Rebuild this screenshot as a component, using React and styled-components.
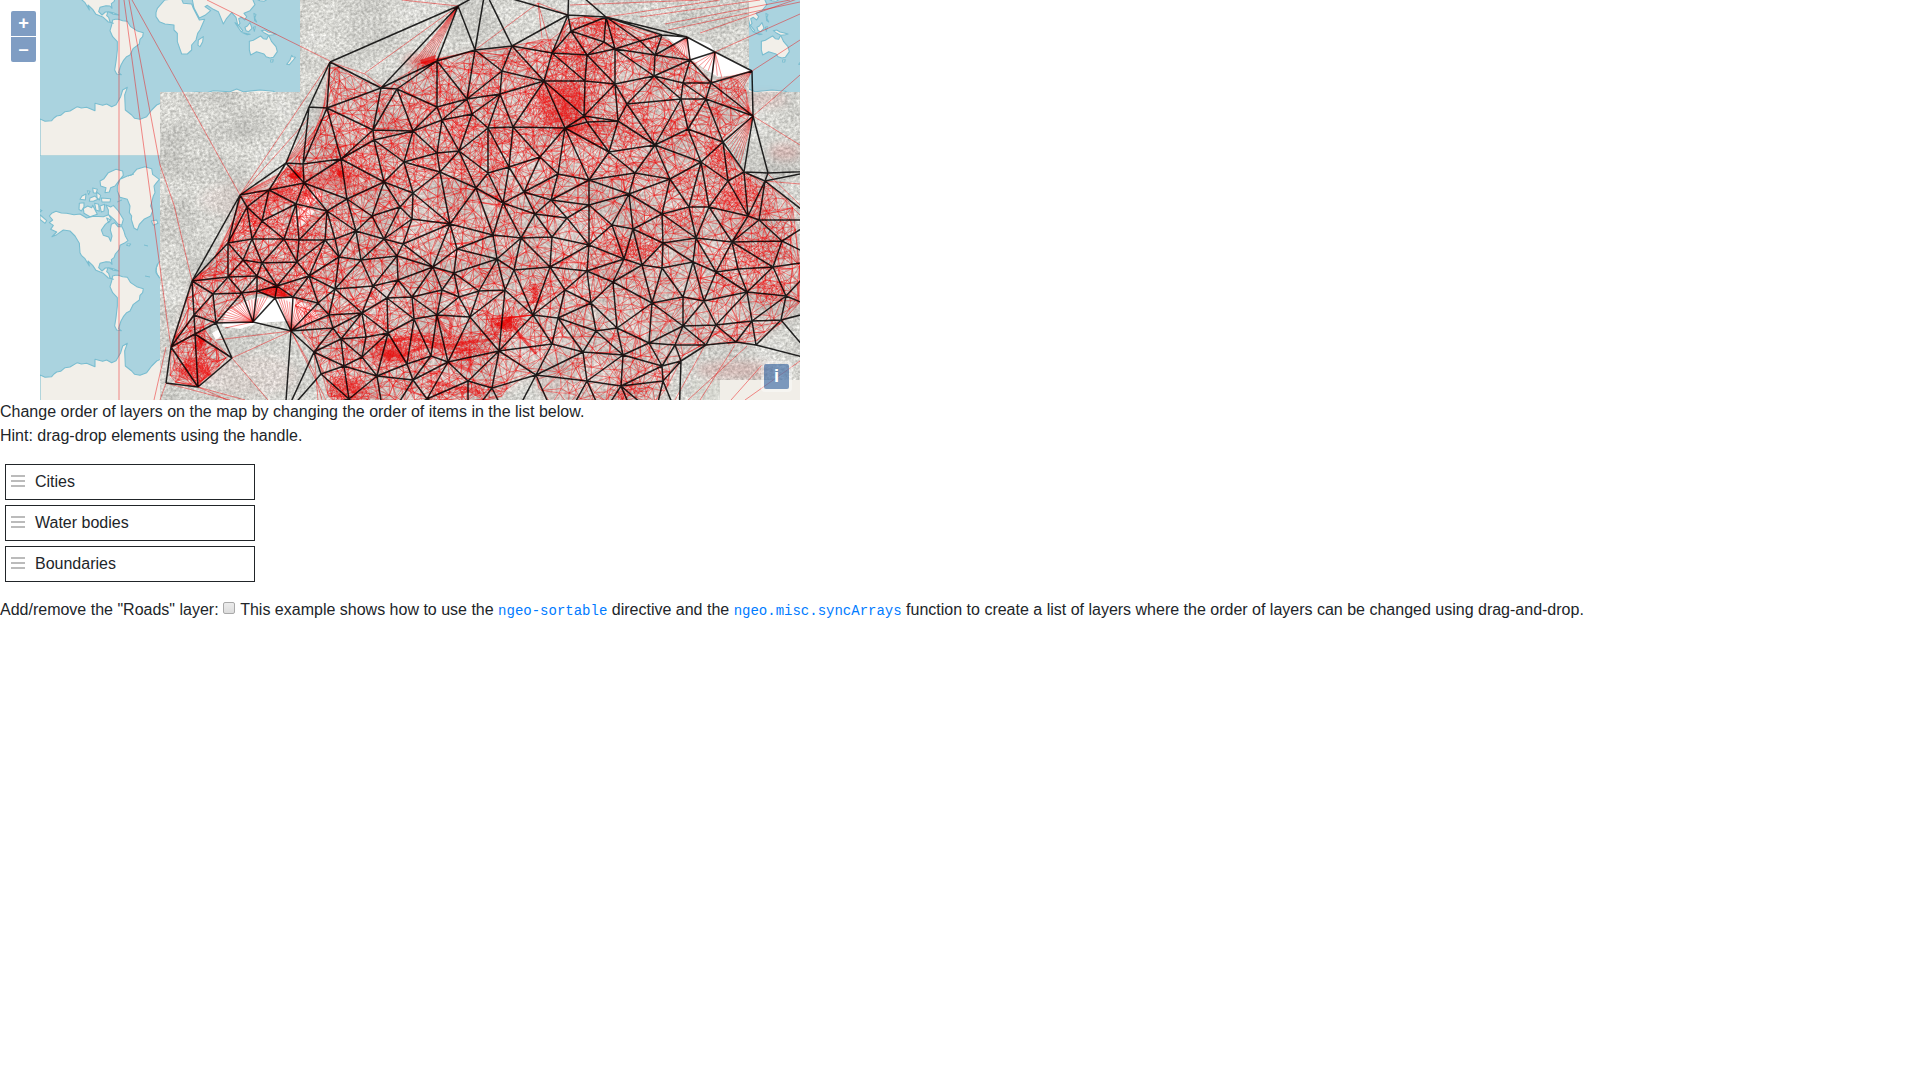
import React, { useMemo, useState } from "react";
import styled, { createGlobalStyle } from "styled-components";

const GlobalStyle = createGlobalStyle`
  *, *::before, *::after { box-sizing: border-box; }
  body {
    margin: 0;
    background: #fff;
    color: #212529;
    font: 400 16px/1.5 "Liberation Sans", Arial, sans-serif;
  }
`;

const MapFrame = styled.div`
  position: relative;
  width: 800px;
  height: 400px;
  overflow: hidden;
`;

const MapDrawing = styled.svg`
  display: block;
`;

const Control = styled.div`
  position: absolute;
  display: flex;
  flex-direction: column;
  gap: 1px;
  padding: 3px;
  border-radius: 4px;
  background: rgba(255, 255, 255, 0.4);
`;

const ZoomControl = styled(Control)`
  top: 8px;
  left: 8px;
`;

const InfoControl = styled(Control)`
  right: 8px;
  bottom: 8px;
`;

const ControlButton = styled.button`
  display: flex;
  align-items: center;
  justify-content: center;
  width: 25px;
  height: 25px;
  padding: 0;
  border: 0;
  border-radius: ${(p) => p.$radius || "2px"};
  background: rgba(0, 60, 136, 0.5);
  color: #fff;
  font: 700 18.24px/1 "Liberation Sans", Arial, sans-serif;
`;

const Paragraph = styled.p`
  margin: 0 0 16px;
`;

const LayerList = styled.ul`
  display: flex;
  flex-direction: column;
  gap: 5px;
  width: 250px;
  margin: 0 0 16px 5px;
  padding: 0;
  list-style: none;
`;

const LayerItem = styled.li`
  display: flex;
  align-items: center;
  height: 36px;
  padding: 0 5px;
  border: 1px solid #212529;
`;

const Handle = styled.span`
  display: flex;
  flex-direction: column;
  gap: 3px;
  width: 14px;
  margin: 0 10px 2px 0;
  cursor: move;
`;

const HandleBar = styled.i`
  height: 2px;
  background: #bbb;
`;

const Checkbox = styled.input`
  appearance: none;
  width: 12px;
  height: 12px;
  margin: 0 1px 0 0;
  border: 1px solid #a9a9a9;
  border-radius: 2px;
  background: linear-gradient(#ececec, #dcdcdc);
  vertical-align: 1px;
`;

const Code = styled.code`
  color: #007bff;
  font: 14px "Liberation Mono", monospace;
`;

/* Vertices of the coarse network, as x,y pairs. */
const NODES = `330,62 381,88 309,107 327,108 286,163 303,164 341,159 373,130 374,140 397,89 240,195 269,190 304,183 384,182
458,6 485,-9 475,50 512,46 568,15 569,-15 606,17 571,31 552,53 587,55 604,42 615,49 640,41 662,35 687,37 655,55 654,76 690,60 715,52
752,71 711,83 683,83 681,99 706,99 753,116 615,84 585,81 544,81 502,71 500,94 437,61 467,99 472,114 437,107 442,120 413,131 488,128
513,127 565,128 584,116 587,122 627,104 618,121 609,152 655,145 688,129 723,142 701,162 744,172 768,173 765,181 815,171 670,179
635,173 589,180 558,174 540,157 509,167 488,173 476,188 524,192 459,151 437,153 440,172 404,162 413,193 728,181 629,194
503,203 551,200 589,205 412,219 450,224 493,235 521,238 535,214 567,218 552,237 612,225 589,245 662,214 633,229 663,243 689,207
709,207 696,238 748,216 759,220 732,242 782,241 457,249 497,259 433,267 454,273 514,270 550,267 587,271 624,259 642,265 662,268
693,262 716,272 738,269 773,267 613,282 565,290 505,290 479,291 459,297 442,290 412,297 437,315 414,319 470,317 533,315 558,318
591,303 652,303 683,297 704,301 747,292 786,296 596,331 617,328 683,326 716,325 752,321 781,320 736,342 756,345 706,345 675,345
649,343 552,344 583,352 623,355 681,361 662,366 663,381 621,386 587,381 536,375 499,351 431,356 448,362 407,364 413,380 468,381
492,388 427,399 247,207 296,204 327,211 347,199 262,221 372,216 400,207 228,243 252,239 284,239 299,240 325,240 335,239
356,231 384,239 403,244 397,256 339,257 361,260 297,262 243,260 262,263 228,277 257,276 309,276 192,281 277,286 335,289 373,286
398,280 213,294 242,293 257,291 275,298 293,297 318,303 387,298 194,315 216,323 253,322 291,331 329,315 362,313 333,328
341,339 366,337 388,333 195,334 171,347 232,358 166,383 198,387 314,352 321,374 344,366 362,357 377,376 349,399 285,415
274,440 385,425 410,430 468,420 510,425 560,430 602,415 655,415 679,420 815,360 815,220 820,260 820,310 640,430`
  .trim()
  .split(/\s+/)
  .map((p) => p.split(",").map(Number));

/* Links that the survey network leaves out of its hull. */
const SKIPPED_LINKS = new Set([
  "330,62 437,61", "752,71 815,171", "753,116 815,171", "569,-15 752,71", "569,-15 687,37", "569,-15 662,35",
  "569,-15 815,171", "606,17 752,71", "662,35 752,71", "569,-15 715,52", "606,17 715,52", "687,37 752,71",
  "330,62 286,163", "330,62 240,195", "309,107 240,195",
]);

const EXTRA_LINKS = "M381 88L458 6M606 17L687 37M687 37L715 52M715 52L752 71M240 195L192 281";

const COUNTRY = [
  [330, 62], [382, 87], [415, 64], [475, 50], [512, 46], [555, 36], [568, 15], [606, 17], [662, 35], [690, 58], [711, 82], [742, 73],
  [753, 116], [722, 142], [744, 172], [765, 181], [800, 210], [800, 310], [756, 343], [706, 345], [681, 361], [660, 405], [550, 405],
  [530, 376], [490, 405], [330, 405], [314, 352], [297, 328], [293, 299], [257, 293], [225, 312], [205, 330], [232, 358], [198, 387],
  [166, 383], [171, 347], [192, 281], [212, 262], [240, 195], [269, 188], [290, 163], [316, 125],
];

/* Denser built-up areas: x, y, x spread, y spread, number of points. */
const CLUSTERS = [
  [295, 174, 7, 4, 90], [340, 173, 6, 7, 60], [270, 190, 18, 7, 110], [256, 217, 8, 10, 80], [302, 193, 14, 8, 80], [427, 60, 12, 4, 90],
  [562, 105, 20, 19, 560], [580, 60, 22, 16, 170], [605, 30, 12, 10, 90], [195, 369, 11, 8, 130], [200, 342, 4, 8, 80],
  [277, 290, 12, 4, 130], [395, 352, 18, 8, 160], [440, 340, 40, 5, 180], [505, 323, 13, 6, 120], [470, 352, 14, 8, 100],
  [349, 388, 14, 10, 130], [450, 390, 30, 7, 80], [720, 160, 9, 14, 110], [735, 195, 20, 12, 150], [760, 250, 22, 16, 150],
  [632, 250, 18, 10, 110], [300, 245, 24, 22, 130], [370, 165, 30, 20, 130], [680, 220, 16, 10, 70], [630, 125, 26, 14, 100],
  [775, 292, 14, 8, 70], [465, 130, 40, 30, 200], [534, 292, 5, 7, 35], [250, 263, 22, 10, 80], [635, 390, 12, 7, 50],
];

function inside([x, y], poly) {
  let hit = false;
  for (let i = 0, j = poly.length - 1; i < poly.length; j = i++) {
    const [xi, yi] = poly[i];
    const [xj, yj] = poly[j];
    if (yi > y !== yj > y && x < ((xj - xi) * (y - yi)) / (yj - yi) + xi) hit = !hit;
  }
  return hit;
}

function randomSource(seed) {
  let s = seed;
  return () => {
    s = (s + 0x6d2b79f5) | 0;
    let t = Math.imul(s ^ (s >>> 15), 1 | s);
    t = (t + Math.imul(t ^ (t >>> 7), 61 | t)) ^ t;
    return ((t ^ (t >>> 14)) >>> 0) / 4294967296;
  };
}

/* Sweep-line Delaunay triangulation; returns unique edges as index pairs. */
function delaunayEdges(points) {
  const n = points.length;
  const v = points.concat([[-4000, -3000], [400, 9000], [5000, -3000]]);
  const order = points.map((_, i) => i).sort((a, b) => v[a][0] - v[b][0]);
  const circle = (a, b, c) => {
    const [ax, ay] = v[a];
    const bx = v[b][0] - ax, by = v[b][1] - ay;
    const cx = v[c][0] - ax, cy = v[c][1] - ay;
    const d = 2 * (bx * cy - by * cx) || 1e-9;
    const b2 = bx * bx + by * by, c2 = cx * cx + cy * cy;
    const ux = (cy * b2 - by * c2) / d, uy = (bx * c2 - cx * b2) / d;
    return { a, b, c, x: ax + ux, y: ay + uy, r: ux * ux + uy * uy };
  };
  let open = [circle(n, n + 1, n + 2)];
  const closed = [];
  for (const i of order) {
    const [px, py] = v[i];
    const border = new Map();
    const keep = [];
    for (const t of open) {
      const dx = px - t.x, dy = py - t.y;
      if (dx > 0 && dx * dx > t.r) {
        closed.push(t);
      } else if (dx * dx + dy * dy - t.r > 1e-7) {
        keep.push(t);
      } else {
        for (const [p, q] of [[t.a, t.b], [t.b, t.c], [t.c, t.a]]) {
          const k = p < q ? p * 20000 + q : q * 20000 + p;
          if (border.has(k)) border.delete(k);
          else border.set(k, [p, q]);
        }
      }
    }
    border.forEach(([p, q]) => keep.push(circle(p, q, i)));
    open = keep;
  }
  const edges = new Map();
  for (const t of closed.concat(open)) {
    for (const [p, q] of [[t.a, t.b], [t.b, t.c], [t.c, t.a]]) {
      if (p < n && q < n) edges.set(p < q ? p * 20000 + q : q * 20000 + p, [p, q]);
    }
  }
  return [...edges.values()];
}

const segment = ([a, b], [c, d]) => `M${a.toFixed(1)} ${b.toFixed(1)}L${c.toFixed(1)} ${d.toFixed(1)}`;

function coarseNetwork() {
  return (
    delaunayEdges(NODES)
      .filter(([a, b]) => {
        const p = NODES[a];
        const q = NODES[b];
        const x = (p[0] + q[0]) / 2;
        const y = (p[1] + q[1]) / 2;
        if (SKIPPED_LINKS.has(`${p} ${q}`) || SKIPPED_LINKS.has(`${q} ${p}`)) return false;
        if (Math.hypot(p[0] - q[0], p[1] - q[1]) > 145) return false;
        if (x > 684 && y > 353 && x < 778) return false;
        if (x > 235 && x < 282 && y > 335 && y < 400) return false;
        if (x < 280 && y > 386) return false;
        return true;
      })
      .map(([a, b]) => segment(NODES[a], NODES[b]))
      .join("") + EXTRA_LINKS
  );
}

function fineNetwork() {
  const rand = randomSource(7);
  const base = 3800;
  const pts = [];
  while (pts.length < base) {
    const p = [160 + rand() * 645, rand() * 405];
    const share = p[1] > 300 && p[0] > 500 ? 0.4 : p[1] > 180 && p[0] > 400 ? 0.62 : 0.9;
    if (inside(p, COUNTRY) && rand() < share) pts.push(p);
  }
  for (const [cx, cy, sx, sy, count] of CLUSTERS) {
    for (let i = 0; i < count; i++) {
      const p = [cx + (rand() + rand() + rand() - 1.5) * sx * 1.5, cy + (rand() + rand() + rand() - 1.5) * sy * 1.5];
      if (inside(p, COUNTRY)) pts.push(p);
    }
  }
  const draw = (list, limit) =>
    delaunayEdges(list)
      .filter(([a, b]) => {
        const m = [(list[a][0] + list[b][0]) / 2, (list[a][1] + list[b][1]) / 2];
        return inside(m, COUNTRY) && Math.hypot(list[a][0] - list[b][0], list[a][1] - list[b][1]) < limit;
      })
      .map(([a, b]) => segment(list[a], list[b]))
      .join("");
  return { dense: draw(pts, 40), sparse: draw(pts.filter((_, i) => i < base && i % 5 === 0), 40) };
}

function fan([x, y], from, to, count) {
  let d = "";
  for (let i = 0; i <= count; i++) {
    const t = i / count;
    d += segment([x, y], [from[0] + (to[0] - from[0]) * t, from[1] + (to[1] - from[1]) * t]);
  }
  return d;
}

const FANS = [
  fan([458, 6], [412, 64], [434, 56], 7),
  fan([253, 322], [226, 305], [268, 296], 13),
  fan([291, 331], [278, 297], [322, 315], 15),
  fan([253, 322], [213, 322], [228, 305], 6),
  fan([715, 52], [694, 64], [722, 78], 6),
  fan([687, 37], [665, 52], [690, 60], 8),
  fan([752, 71], [716, 80], [737, 98], 7),
  fan([753, 116], [724, 140], [740, 164], 8),
  fan([753, 116], [722, 96], [740, 90], 4),
  fan([286, 163], [309, 125], [326, 130], 4),
  fan([171, 347], [188, 318], [196, 342], 6),
  fan([192, 281], [212, 262], [222, 280], 6),
  fan([240, 195], [290, 168], [262, 190], 5),
  fan([198, 387], [177, 368], [220, 357], 8),
  fan([228, 243], [240, 215], [250, 230], 6),
  fan([533, 315], [480, 320], [510, 318], 5),
  fan([565, 128], [596, 150], [612, 122], 9),
].join("");

const LONG_LINES =
  "M119 0V400M124 0L151 200L167 320L171 347M129 0L160 165L174 205L192 281M132 0L240 195M207 0L330 61" +
  "M330 62L240 195M309 118L240 195M330 62L365 74L382 87M365 73L458 6M402 0L458 6M475 50L538 3L568 15M538 3L552 53M538 3L542 38" +
  "M570 5L700 0M606 17L720 0M640 17L760 0M665 24L790 0M668 30L800 2M700 33L800 -2M715 52L800 14M752 71L800 40M753 116L800 75M753 116L800 145" +
  "M166 347L154 400M166 383L160 400M198 387L245 400M198 387L232 402M166 383L230 400M232 358L268 400M232 358L291 331M216 340L291 331M225 328L253 322" +
  "M291 331L314 372L322 400M291 331L326 400M314 352L318 400M704 347L675 400M735 345L700 400M747 346L688 400M762 365L731 400M800 361L745 400" +
  "M765 181L800 184M768 174L800 205M765 181L800 215M533 315L536 354M513 326L536 354M499 351L540 285";

/* One world tile, drawn on a 768-unit square. */
const CONTINENTS = [
  "M28 180L35 172 48 166 64 171 80 172 102 176 120 174 140 186 160 181 190 182 206 176 214 190 196 205 184 222 190 238 206 243 212 256 216 240 211 222 214 205 224 200 234 212 246 212 252 226 256 240 264 254 252 262 240 268 238 280 226 294 222 305 214 311 216 325 210 318 198 317 180 322 176 335 186 345 196 336 204 335 200 347 206 352 210 366 220 370 205 366 190 352 168 343 158 328 144 315 148 330 135 308 124 298 120 290 118 262 105 240 90 225 70 222 50 236 36 242 50 228 32 220 40 208 28 200 38 192Z",
  "M232 90L240 70 262 60 276 56 290 40 315 32 335 38 338 55 358 70 348 82 342 90 345 110 340 120 332 150 338 164 332 180 312 190 298 205 292 222 282 216 274 190 275 180 268 170 270 150 262 130 240 124 232 105Z",
  "M180 75L192 68 205 50 228 40 248 45 250 58 240 70 225 90 212 95 208 108 195 110 198 95 182 90Z",
  "M118 142L132 140 132 152 124 165 117 160ZM130 158L143 150 155 155 158 148 172 175 150 182 132 172ZM126 120L138 114 136 132 120 130ZM142 104L150 106 146 116ZM158 96L172 100 168 112 160 110ZM150 126L165 120 174 130 160 136 148 136ZM170 108L182 118 178 132 171 125ZM184 126L212 128 210 138 186 138ZM164 142L176 145 178 166 168 162ZM198 147L212 153 220 148 235 165 250 190 245 208 234 204 222 190 205 175 205 162ZM180 150L194 145 192 165 184 168ZM200 186L212 192 206 200Z",
  "M334 195L350 192 354 202 340 208ZM0 176L20 194 15 202 0 190ZM262 264L272 264 268 270 260 268ZM206 335L220 338 236 345 220 343ZM-2 160L6 164 0 168Z",
  "M218 360L226 358 235 358 248 362 262 364 272 380 290 392 310 398 308 410 300 418 298 432 280 445 270 465 260 470 250 482 243 495 238 510 236 518 244 524 230 522 224 510 228 485 232 450 232 425 218 410 210 392 215 375Z",
  "M0 657L15 664 35 662 42 654 50 648 62 646 75 635 90 633 112 620 124 624 140 622 165 632 165 610 188 616 200 612 215 620 228 614 242 590 248 570 262 562 254 585 256 630 275 645 284 655 300 658 320 650 335 630 350 615 370 606 400 590 430 580 470 576 500 578 520 572 570 575 590 567 610 575 660 570 700 574 730 590 768 620V768H0Z",
  "M348 338L352 325 365 310 374 300 390 298 408 294 425 298 430 310 455 312 460 325 478 360 494 358 480 390 473 400 468 420 455 435 455 450 442 462 425 462 412 425 412 400 402 390 402 375 375 372 358 365 348 350Z",
  "M455 290L462 324 478 354 495 346 512 332 495 320 502 316 520 328 535 335 550 372 560 355 575 338 588 352 594 378 600 370 596 356 604 352 614 360 620 350 612 340 630 332 645 314 638 298 650 280 680 240H430L432 270Z",
  "M475 420L490 410 488 425 480 440 474 436ZM628 432L628 424 640 421 655 412 662 408 670 416 680 418 686 406 695 425 708 440 712 455 700 472 690 474 678 470 672 462 650 455 632 465 628 450Z",
  "M692 480L700 479 698 486 692 486ZM755 466L758 470 766 472 760 480 748 494 740 493 750 480ZM615 382L622 378 630 368 636 385 626 395 618 392ZM585 368L592 372 608 392 604 396ZM608 398L630 403 622 404ZM642 340L648 344 644 354 650 366 644 362ZM664 392L674 390 684 396 694 398 708 402 700 404 686 406 672 398ZM640 382L646 380 643 394ZM654 300L664 292 682 298 672 304 660 302Z",
].join("");

function MapView() {
  const coarse = useMemo(coarseNetwork, []);
  const fine = useMemo(fineNetwork, []);
  return (
    <MapDrawing width="800" height="400" viewBox="0 0 800 400">
      <defs>
        <path id="world" d={CONTINENTS} fill="#f2efe9" stroke="#79bdd0" strokeWidth="3.2" strokeLinejoin="round" />
        <clipPath id="sea">
          <path d="M40 0H300V92H160V400H40ZM749 0H800V92H749Z" />
        </clipPath>
        <clipPath id="lowerWorld">
          <path d="M40 156H160V400H40Z" />
        </clipPath>
        <filter id="grain" x="0" y="0" width="100%" height="100%" colorInterpolationFilters="sRGB">
          <feTurbulence type="fractalNoise" baseFrequency="0.34 0.38" numOctaves="3" seed="4" result="small" />
          <feColorMatrix in="small" values="0.42 0 0 0 0.65  0.42 0 0 0 0.65  0.42 0 0 0 0.635  0 0 0 0 1" result="g1" />
          <feTurbulence type="fractalNoise" baseFrequency="0.02 0.028" numOctaves="5" seed="23" />
          <feColorMatrix values="0.22 0 0 0 0.85  0.22 0 0 0 0.85  0.22 0 0 0 0.845  0 0 0 0 1" result="g2" />
          <feBlend in="g1" in2="g2" mode="multiply" />
        </filter>
        <filter id="soft" x="-50%" y="-50%" width="200%" height="200%">
          <feGaussianBlur stdDeviation="4" />
        </filter>
      </defs>
      <path d="M300 0H749V92H800V400H160V92H300Z" fill="#d3d2cf" filter="url(#grain)" />
      <path d="M692 380H720V400H692Z" fill="#d8d9d0" opacity="0.4" />
      <g clipPath="url(#sea)">
        <rect width="800" height="400" fill="#aad3df" />
        <use href="#world" transform="translate(40 -100) scale(.33333)" />
        <use href="#world" transform="translate(552 -100) scale(.33333)" />
        <g clipPath="url(#lowerWorld)">
          <rect width="800" height="400" fill="#aad3df" />
          <use href="#world" transform="translate(40 156) scale(.33333)" />
        </g>
        <path d="M145 276L150 277M117 202L122 200M128 176L134 174M144 245L148 246M158 264Q154 271 159 277" stroke="#79bdd0" fill="none" />
      </g>
      <g fill="#fff">
        <path d="M222 326L226 311 242 303 257 297 275 299 293 298 312 307 320 318 298 328 289 321 258 323 240 329Z" />
        <path d="M666 36L687 37 710 44 715 52 752 71 744 74 718 77 703 68 690 58Z" />
        <path d="M294 217L303 205 315 211 306 221 297 231ZM300 198L320 192 324 197 310 205ZM212 333L219 329 221 336 216 340ZM450 253L458 248 462 252 448 259Z" />
      </g>
      <g fill="#e00000" filter="url(#soft)">
        <polygon points={COUNTRY.map((p) => p.join()).join(" ")} opacity="0.05" />
        <ellipse cx="562" cy="103" rx="20" ry="22" opacity="0.2" />
        <ellipse cx="422" cy="61" rx="17" ry="5" opacity="0.4" />
        <ellipse cx="325" cy="180" rx="30" ry="7" opacity="0.3" />
        <ellipse cx="275" cy="195" rx="20" ry="6" opacity="0.28" />
        <ellipse cx="390" cy="353" rx="18" ry="7" opacity="0.4" />
        <ellipse cx="745" cy="203" rx="30" ry="22" opacity="0.1" />
        <ellipse cx="194" cy="368" rx="16" ry="10" opacity="0.3" />
        <ellipse cx="350" cy="389" rx="15" ry="8" opacity="0.35" />
        <ellipse cx="735" cy="370" rx="40" ry="9" opacity="0.1" />
        <ellipse cx="785" cy="152" rx="16" ry="8" opacity="0.12" />
        <ellipse cx="765" cy="100" rx="22" ry="7" opacity="0.08" />
        <ellipse cx="250" cy="375" rx="50" ry="20" opacity="0.03" />
        <ellipse cx="245" cy="200" rx="45" ry="18" opacity="0.03" />
      </g>
      <path d="M720 380H800V400H720Z" fill="#f1eee8" />
      <g fill="none" stroke="#ee1111">
        <path d={fine.dense} strokeWidth="0.6" opacity="0.78" />
        <path d={fine.sparse} strokeWidth="0.8" opacity="0.5" />
        <path d={FANS} strokeWidth="0.65" opacity="0.7" />
        <path d={LONG_LINES} strokeWidth="0.95" opacity="0.5" />
      </g>
      <g fill="#e60000">
        <path d="M288 176L295 170 302 176 295 180ZM197 336L205 340 201 347ZM420 60L436 55 434 63 421 64ZM338 169L344 172 342 178 337 175ZM494 324L504 320 512 315 512 328 505 330Z" opacity="0.65" />
        <path d="M258 291L275 286 291 296 275 298ZM382 355L390 350 398 354 388 361Z" opacity="0.5" />
      </g>
      <path d="M377 345C393 338 413 337 433 343S455 343 480 341S491 330 512 318M512 325L536 354M436 315L450 337 451 319 438 316M398 357L425 346 470 350 470 371 448 362M427 381L480 392M534 284L535 300 518 312" fill="none" stroke="#e80000" strokeWidth="3" opacity="0.45" />
      <path d={coarse} fill="none" stroke="#000" strokeWidth="1.5" opacity="0.85" />
    </MapDrawing>
  );
}

function Layer({ name }) {
  return (
    <LayerItem>
      <Handle>
        <HandleBar />
        <HandleBar />
        <HandleBar />
      </Handle>
      {name}
    </LayerItem>
  );
}

export default function App() {
  const [roads, setRoads] = useState(false);
  return (
    <>
      <GlobalStyle />
      <MapFrame>
        <MapView />
        <ZoomControl>
          <ControlButton $radius="2px 2px 0 0">+</ControlButton>
          <ControlButton $radius="0 0 2px 2px">–</ControlButton>
        </ZoomControl>
        <InfoControl>
          <ControlButton>i</ControlButton>
        </InfoControl>
      </MapFrame>
      <Paragraph>
        Change order of layers on the map by changing the order of items in the list below.
        <br />
        Hint: drag-drop elements using the handle.
      </Paragraph>
      <LayerList>
        <Layer name="Cities" />
        <Layer name="Water bodies" />
        <Layer name="Boundaries" />
      </LayerList>
      <Paragraph>
        Add/remove the "Roads" layer:{" "}
        <Checkbox type="checkbox" checked={roads} onChange={(e) => setRoads(e.target.checked)} /> This example shows how to use the{" "}
        <Code>ngeo-sortable</Code> directive and the <Code>ngeo.misc.syncArrays</Code> function to create a list of layers where the
        order of layers can be changed using drag-and-drop.
      </Paragraph>
    </>
  );
}
